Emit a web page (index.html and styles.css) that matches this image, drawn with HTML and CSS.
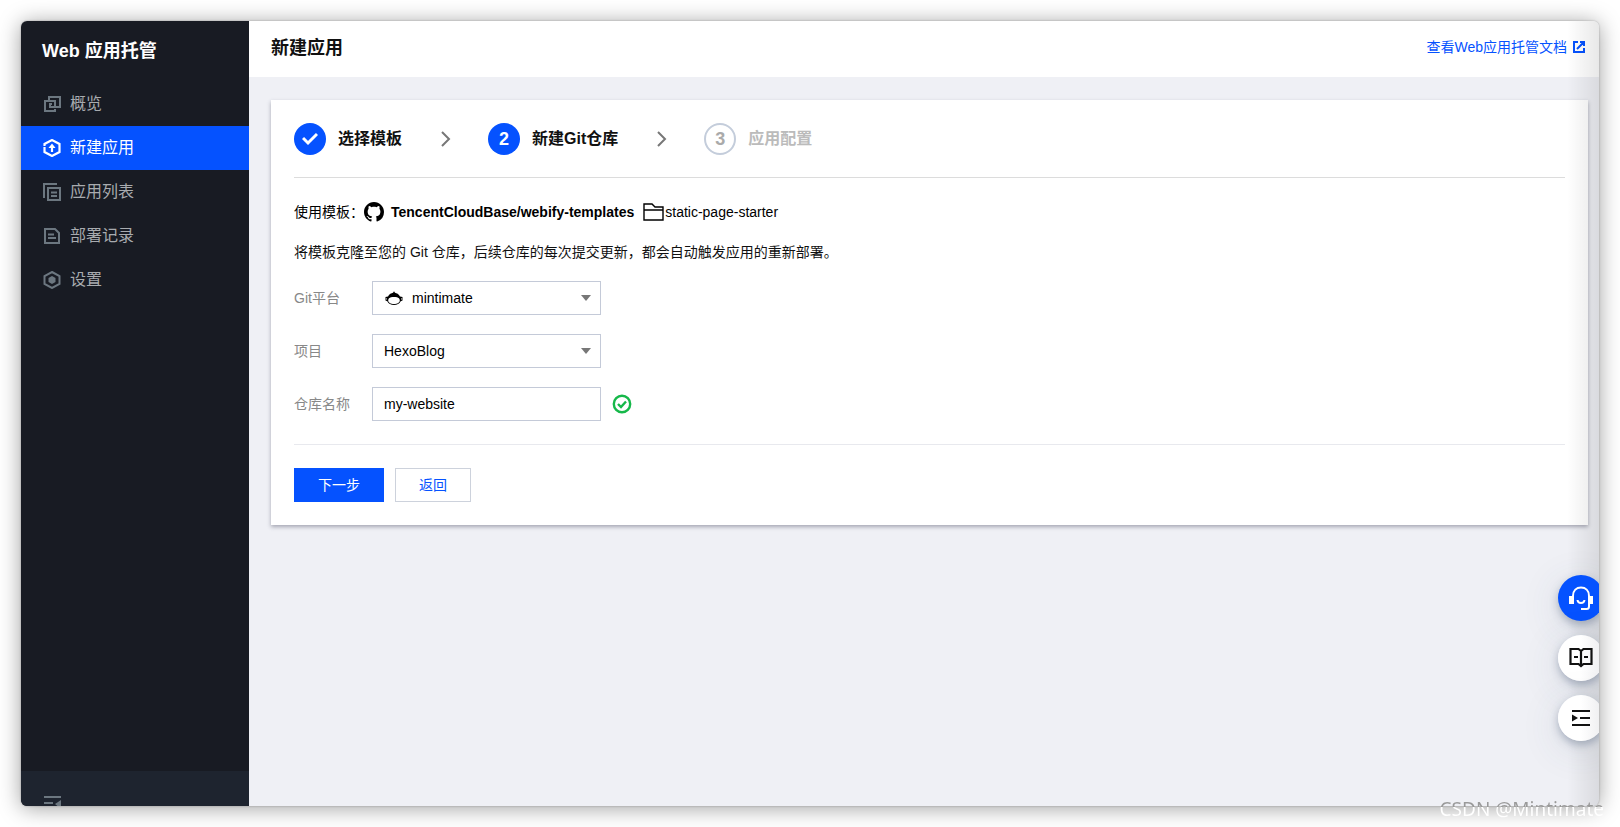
FILE: index.html
```html
<!DOCTYPE html>
<html lang="zh-CN">
<head>
<meta charset="utf-8">
<title>新建应用 - Web 应用托管</title>
<link rel="stylesheet" href="styles.css">
</head>
<body>
<div class="window">
  <aside class="sidebar">
    <h2 class="brand">Web 应用托管</h2>
    <nav class="menu">
      <a class="menu-item" href="#">
        <svg class="menu-icon" viewBox="0 0 18 18" fill="none" stroke="currentColor" stroke-width="2"><path d="M6 6V2h11v10h-4M12 14v2H2V6h10v6H7V9h2"/></svg>
        概览</a>
      <a class="menu-item active" href="#" aria-current="page">
        <svg class="menu-icon" viewBox="0 0 18 18" fill="none" stroke="currentColor" stroke-width="2.200"><path d="M1.500 7V5L9 1l7.500 4v6M1.500 8v5L9 17l7.500-4v-2"/><path d="M9 13V7"/><path d="M5.500 9L9 4.500 12.500 9z" fill="currentColor" stroke="none"/></svg>
        新建应用</a>
      <a class="menu-item" href="#">
        <svg class="menu-icon" viewBox="0 0 18 18" fill="none" stroke="currentColor" stroke-width="2"><path d="M1 15V1h13M5 5h12v12H5z"/><path d="M8 9.500h6M8 13h6"/></svg>
        应用列表</a>
      <a class="menu-item" href="#">
        <svg class="menu-icon" viewBox="0 0 18 18" fill="none" stroke="currentColor" stroke-width="2"><path d="M2 2h10l4 4v10H2z"/><path d="M5 7.500h6M5 11h8"/></svg>
        部署记录</a>
      <a class="menu-item" href="#">
        <svg class="menu-icon" viewBox="0 0 18 18" fill="none" stroke="currentColor" stroke-width="2"><path d="M9 1l7.500 4v8L9 17l-7.500-4V5z"/><path d="M9 5l3.500 2v4L9 13l-3.500-2V7z" fill="currentColor" stroke="none"/></svg>
        设置</a>
    </nav>
    <button class="collapse" type="button" aria-label="收起菜单">
      <svg class="menu-icon" viewBox="0 0 18 18" fill="currentColor"><path d="M1 1h17v2H1zM1 7h9v2H1zM18 5v9l-6-5zM1 13h9v2H1z"/></svg>
    </button>
  </aside>

  <div class="page">
    <header class="topbar">
      <h1 class="page-title">新建应用</h1>
      <a class="doc-link" href="#">查看Web应用托管文档
        <svg class="ext-icon" viewBox="0 0 12 12" fill="none" stroke="currentColor" stroke-width="2"><path d="M5 1H1v10h10V7M4 8l6-6M7 1h4v4"/></svg>
      </a>
    </header>

    <main class="content">
      <section class="card">
        <ol class="steps">
          <li class="step">
            <span class="dot"><svg class="tick" viewBox="0 0 16 16" fill="none" stroke="currentColor" stroke-width="3"><path d="M1 7l5 5 9-9"/></svg></span>
            选择模板
            <svg class="chevron" viewBox="0 0 10 16" fill="none" stroke="currentColor" stroke-width="2"><path d="M1 1l7 7-7 7"/></svg>
          </li>
          <li class="step">
            <span class="dot">2</span>
            新建Git仓库
            <svg class="chevron" viewBox="0 0 10 16" fill="none" stroke="currentColor" stroke-width="2"><path d="M1 1l7 7-7 7"/></svg>
          </li>
          <li class="step pending"><span class="dot">3</span>应用配置</li>
        </ol>

        <p class="template">
          <span class="template-label">使用模板：</span>
          <svg class="github" viewBox="0 0 16 16" fill="currentColor"><path d="M8 0C3.580 0 0 3.580 0 8c0 3.540 2.290 6.530 5.470 7.590.4.070.55-.17.55-.38 0-.19-.01-.82-.01-1.490-2.010.37-2.530-.49-2.690-.94-.09-.23-.48-.94-.82-1.130-.28-.15-.68-.52-.01-.53.63-.01 1.080.58 1.230.82.72 1.210 1.870.87 2.330.66.07-.52.28-.87.51-1.070-1.780-.2-3.640-.89-3.640-3.950 0-.87.31-1.590.82-2.150-.08-.2-.36-1.020.08-2.120 0 0 .67-.21 2.200.82.64-.18 1.320-.27 2-.27s1.360.09 2 .27c1.530-1.040 2.200-.82 2.200-.82.44 1.100.16 1.920.08 2.120.51.56.82 1.270.82 2.150 0 3.070-1.870 3.750-3.650 3.950.29.25.54.73.54 1.480 0 1.070-.01 1.930-.01 2.200 0 .21.15.46.55.38A8.010 8.010 0 0 0 16 8c0-4.420-3.580-8-8-8z"/></svg>
          <strong>TencentCloudBase/webify-templates</strong>
          <span class="folder-name"><svg class="folder" viewBox="0 0 21 18" fill="none" stroke="currentColor" stroke-width="1.400"><path d="M1 17V1h8l3 3h8v13zM1 7h19"/></svg>static-page-starter</span>
        </p>
        <p class="note">将模板克隆至您的 Git 仓库，后续仓库的每次提交更新，都会自动触发应用的重新部署。</p>

        <form class="form">
          <div class="fields">
            <label class="label" for="platform">Git平台</label>
            <div class="control select with-icon">
              <svg class="coding" viewBox="0 0 18 14"><path d="M3 5.500C4 3 6.500 2.200 8 1.800L9 .3l1 1.500c1.500.4 4 1.200 5 3.700l2.500.5v3.500l-1.800.8C14.500 13 12 14 9 14s-5.500-1-6.700-3.700L.5 9.500V6z"/><path d="M3.200 9.500C3.200 7.500 4.500 6.800 6 6.300c2-.5 4-.5 6 0 1.500.5 2.800 1.200 2.800 3.200 0 2.300-2.500 3.500-5.800 3.500s-5.800-1.200-5.800-3.500z" fill="#fff"/><path d="M1.400 7v1.800M16.600 7v1.800" stroke="#fff" stroke-width=".6"/></svg>
              <select id="platform" class="input"><option>mintimate</option></select>
            </div>
            <label class="label" for="project">项目</label>
            <div class="control select">
              <select id="project" class="input"><option>HexoBlog</option></select>
            </div>
            <label class="label" for="repo">仓库名称</label>
            <div class="control">
              <input id="repo" class="input" type="text" value="my-website">
              <svg class="valid" viewBox="0 0 20 20" fill="none" stroke="currentColor" stroke-width="2.400"><circle cx="10" cy="10" r="8.200"/><path d="M6 10l3 3 5-5.500"/></svg>
            </div>
          </div>
          <div class="actions">
            <button class="btn primary" type="button">下一步</button>
            <button class="btn" type="button">返回</button>
          </div>
        </form>
      </section>
    </main>
  </div>

  <div class="edge-shade"></div>
  <div class="floats">
    <button class="float blue" type="button" aria-label="客服">
      <svg class="float-icon" viewBox="0 0 24 24" fill="none" stroke="currentColor" stroke-width="2"><path d="M4 10C4 4.500 7.500 1.500 12 1.500s8 3 8 8.500v10.500q0 2.500-2.500 2.500H12"/><path d="M8.500 14c.5 4 6.500 4 7 0"/><path d="M0 10h5v8H0zM19 10h5v8h-5z" fill="currentColor" stroke="none"/></svg>
    </button>
    <button class="float" type="button" aria-label="文档">
      <svg class="float-icon" viewBox="0 0 24 24" fill="none" stroke="currentColor" stroke-width="2.200"><path d="M12 5L9.500 3H1.500v15h8l2.500 2 2.500-2h8V3h-8zM12 5v16M5 11h4M15 11h4"/></svg>
    </button>
    <button class="float" type="button" aria-label="展开列表">
      <svg class="float-icon" viewBox="0 0 24 24" fill="none" stroke="currentColor" stroke-width="2.200"><path d="M3 5h18M11 12h10M3 19h18"/><path d="M3 8.500v7l6-3.500z" fill="currentColor" stroke="none"/></svg>
    </button>
  </div>
</div>
<div class="watermark">CSDN @Mintimate</div>
</body>
</html>
```

FILE: styles.css
```css
* { box-sizing: border-box; }

body {
  margin: 0;
  height: 100vh;
  padding: 21px;
  background: #fff;
  color: #111;
  font: 14px/20px "Liberation Sans", "Noto Sans CJK SC", sans-serif;
  overflow: hidden;
}

h1, h2, p, ol { margin: 0; padding: 0; }
button, select, input { font: inherit; }
svg { display: block; flex: none; }

.window {
  position: relative;
  display: flex;
  height: 100%;
  border-radius: 6px;
  background: #eff0f5;
  box-shadow: 0 0 2px rgba(0, 0, 0, .3), 0 2px 22px rgba(0, 0, 0, .38);
}

.sidebar {
  display: flex;
  flex-direction: column;
  width: 228px;
  border-radius: 6px 0 0 6px;
  background: #181b23;
  overflow: hidden;
}

.brand {
  padding: 18px 21px 19px;
  color: #fff;
  font-size: 18px;
  line-height: 24px;
}

.menu { flex: 1; }

.menu-item {
  display: flex;
  align-items: center;
  gap: 9px;
  height: 44px;
  padding: 0 22px;
  color: #a8abaf;
  font-size: 16px;
  text-decoration: none;
}

.menu-icon { width: 18px; height: 18px; color: #6c7780; }
.menu-item.active { background: #0552ff; color: #fff; }
.menu-item.active .menu-icon { color: #fff; }

.collapse {
  display: flex;
  align-items: flex-start;
  height: 35px;
  padding: 24px 22px 0;
  border: 0;
  background: #1e242f;
  overflow: hidden;
}

.page { flex: 1; min-width: 0; }

.topbar {
  display: flex;
  align-items: center;
  justify-content: space-between;
  height: 56px;
  padding: 0 14px 4px 22px;
  border-radius: 0 6px 0 0;
  background: #fff;
}

.page-title { padding-top: 1px; font-size: 18px; line-height: 24px; }

.doc-link {
  display: flex;
  align-items: center;
  gap: 6px;
  color: #0552ff;
  text-decoration: none;
}

.ext-icon { width: 12px; height: 12px; }

.content { padding: 23px 11px 0 22px; }

.card {
  padding: 23px;
  background: #fff;
  box-shadow: 0 2px 4px rgba(54, 58, 80, .4);
}

.steps {
  display: flex;
  padding-bottom: 22px;
  border-bottom: 1px solid #dcdcdc;
  list-style: none;
}

.step {
  display: flex;
  align-items: center;
  gap: 12px;
  font-size: 16px;
  font-weight: bold;
}

.dot {
  display: flex;
  align-items: center;
  justify-content: center;
  width: 32px;
  height: 32px;
  border-radius: 50%;
  background: #0552ff;
  color: #fff;
  font-size: 18px;
}

.tick { width: 16px; height: 16px; }
.chevron { width: 10px; height: 16px; margin: 0 37px 0 27px; color: #777; }
.step.pending { color: #bbb; }
.pending .dot { border: 2px solid #c4cddb; background: #fff; color: #aaa; }

.template {
  display: flex;
  align-items: center;
  margin-top: 24px;
  color: #000;
}

.template-label { width: 70px; }
.github { width: 20px; height: 20px; margin-right: 7px; }
.folder-name { display: flex; align-items: center; margin-left: 9px; }
.folder { width: 21px; height: 18px; margin-right: 1px; }
.note { margin-top: 20px; }

.form { margin-top: 19px; }

.fields {
  display: grid;
  grid-template-columns: 78px 1fr;
  align-items: center;
  row-gap: 19px;
  padding-bottom: 23px;
  border-bottom: 1px solid #e8e9ee;
}

.label { color: #888; }

.control {
  position: relative;
  display: flex;
  align-items: center;
  gap: 11px;
  justify-self: start;
}

.input {
  width: 229px;
  height: 34px;
  padding: 0 11px;
  border: 1px solid #c4cad8;
  border-radius: 0;
  outline: 0;
  background: #fff;
  color: #000;
  appearance: none;
}

.with-icon .input { padding-left: 39px; }
.coding { position: absolute; left: 13px; top: 10px; width: 18px; height: 14px; }

.select::after {
  content: "";
  position: absolute;
  right: 10px;
  border: 5px solid transparent;
  border-top: 6px solid #777;
  border-bottom: 0;
  pointer-events: none;
}

.valid { width: 20px; height: 20px; color: #16b84a; }

.actions { display: flex; gap: 11px; padding-top: 23px; }

.btn {
  height: 34px;
  padding: 0 23px;
  border: 1px solid #cdd2dc;
  background: #fff;
  color: #0552ff;
}

.btn.primary { border-color: #0552ff; background: #0552ff; color: #fff; }

/* soft shading along the right border of the window */
.edge-shade {
  position: absolute;
  inset: 0 0 0 auto;
  width: 32px;
  border-radius: 0 6px 6px 0;
  background: linear-gradient(to right, rgba(0, 0, 0, 0), rgba(0, 0, 0, .09));
  pointer-events: none;
}

/* floating tools, cut off by the window border */
.floats {
  position: absolute;
  right: 0;
  bottom: 0;
  display: flex;
  flex-direction: column;
  gap: 14px;
  width: 141px;
  padding: 100px 0 65px 100px;
  overflow: hidden;
  pointer-events: none;
}

.float {
  display: flex;
  align-items: center;
  justify-content: center;
  width: 46px;
  height: 46px;
  padding: 0;
  border: 0;
  border-radius: 50%;
  background: linear-gradient(to right, #fff 50%, #ececee);
  box-shadow: 0 4px 8px rgba(55, 75, 105, .35), 0 8px 40px rgba(55, 75, 105, .14);
  color: #111;
  pointer-events: auto;
}

.float.blue { background: #0552ff; color: #fff; }
.float-icon { width: 24px; height: 24px; }

.watermark {
  position: absolute;
  right: 16px;
  bottom: 4px;
  background: linear-gradient(#999 43%, #fff 43%);
  background-clip: text;
  color: transparent;
  font: 19px/28px "Noto Sans", sans-serif;
}
```
